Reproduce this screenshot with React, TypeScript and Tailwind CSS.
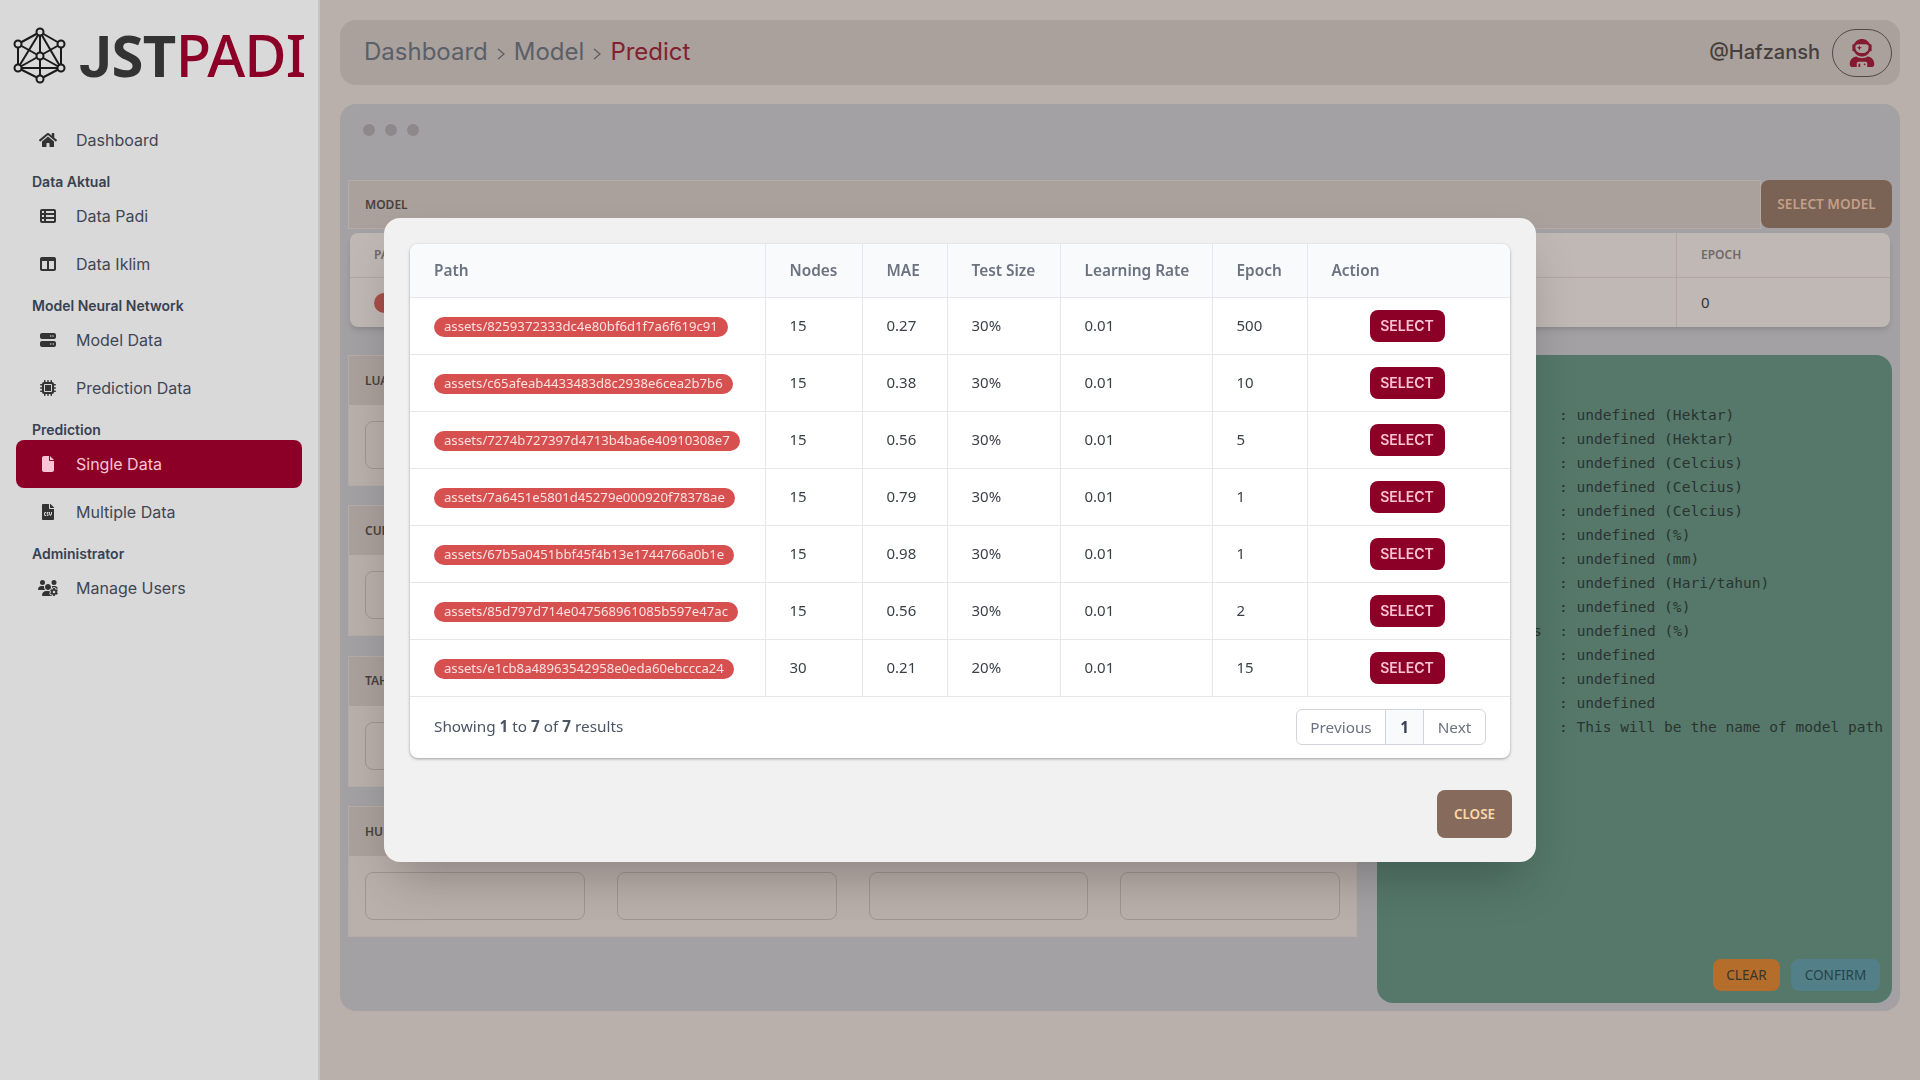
import { FaHome, FaUserAstronaut, FaFileCsv } from "react-icons/fa";
import { FaTableList, FaTableColumns, FaServer, FaMicrochip, FaFile, FaUsersGear } from "react-icons/fa6";
import type { ReactNode } from "react";

const inter = "font-['Inter',sans-serif]";
const noto = "font-['Noto_Sans',sans-serif]";

const rows = [
    { path: "assets/8259372333dc4e80bf6d1f7a6f619c91", nodes: 15, mae: "0.27", test: "30%", lr: "0.01", epoch: 500 },
    { path: "assets/c65afeab4433483d8c2938e6cea2b7b6", nodes: 15, mae: "0.38", test: "30%", lr: "0.01", epoch: 10 },
    { path: "assets/7274b727397d4713b4ba6e40910308e7", nodes: 15, mae: "0.56", test: "30%", lr: "0.01", epoch: 5 },
    { path: "assets/7a6451e5801d45279e000920f78378ae", nodes: 15, mae: "0.79", test: "30%", lr: "0.01", epoch: 1 },
    { path: "assets/67b5a0451bbf45f4b13e1744766a0b1e", nodes: 15, mae: "0.98", test: "30%", lr: "0.01", epoch: 1 },
    { path: "assets/85d797d714e047568961085b597e47ac", nodes: 15, mae: "0.56", test: "30%", lr: "0.01", epoch: 2 },
    { path: "assets/e1cb8a48963542958e0eda60ebccca24", nodes: 30, mae: "0.21", test: "20%", lr: "0.01", epoch: 15 },
];

const results = [
    "undefined (Hektar)", "undefined (Hektar)", "undefined (Celcius)", "undefined (Celcius)", "undefined (Celcius)",
    "undefined (%)", "undefined (mm)", "undefined (Hari/tahun)", "undefined (%)", "undefined (%)",
    "undefined", "undefined", "undefined", "This will be the name of model path",
];

function Logo() {
    const top = [39, 32], rt = [60, 44], rb = [60, 68], bot = [39, 79], lb = [17, 68], lt = [17, 44];
    const c = [39, 56];
    const edges = [
        [top, rt], [rt, rb], [rb, bot], [bot, lb], [lb, lt], [lt, top],
        [top, bot], [lb, rb], [top, lb], [top, rb], [lt, rb], [rt, lb],
    ];
    return (
        <svg width="56" height="60" viewBox="11 28 56 56" className="shrink-0" fill="none" stroke="#1a1a1a" strokeWidth="2">
            {edges.map(([a, b], i) => <line key={i} x1={a[0]} y1={a[1]} x2={b[0]} y2={b[1]} />)}
            {[top, rt, rb, bot, lb, lt, c].map((p, i) => <circle key={i} cx={p[0]} cy={p[1]} r="3.5" fill="#d9d9d9" />)}
        </svg>
    );
}

function Chevron() {
    return (
        <svg width="8" height="12" viewBox="0 0 8 12" className="mx-[9px] mt-[5px]" fill="none" stroke="#5a5f68" strokeWidth="1.4">
            <polyline points="1,1 7,6 1,11" />
        </svg>
    );
}

function NavItem({ icon, label, active }: { icon: ReactNode; label: string; active?: boolean }) {
    return (
        <div className={`flex items-center h-12 rounded-lg text-[16px] ${active ? "bg-[#8c0027] text-[#fbc4d4]" : "text-[#3f4654]"}`}>
            <span className={`w-[60px] pl-[7px] pr-[3px] flex justify-center text-[16px] ${active ? "text-[#fbc4d4]" : "text-[#333333]"}`}>{icon}</span>
            <span>{label}</span>
        </div>
    );
}

function NavTitle({ children }: { children: string }) {
    return <p className="mt-[8px] pl-[16px] text-[14px] font-semibold leading-[20px] text-[#374151]">{children}</p>;
}

function Sidebar() {
    return (
        <aside className={`w-[320px] shrink-0 min-h-screen bg-[#d9d9d9] border-r-2 border-[#c6c4c3] px-[16px] relative z-10 ${inter}`}>
            <div className="flex items-center h-[116px] -ml-[4px] pb-[4px]">
                <Logo />
                <span className={`text-[58px] leading-none ml-[11px] ${noto}`}>
                    <span className="font-bold text-[#333333]">
                        <span className="font-['Roboto',sans-serif]">J</span>
                        <span className="tracking-[-0.5px]">ST</span>
                    </span>
                    <span className="font-medium text-[#8c0027] tracking-[-1px]">PADI</span>
                </span>
            </div>
            <nav className="flex flex-col">
                <NavItem icon={<FaHome size={18} />} label="Dashboard" />
                <NavTitle>Data Aktual</NavTitle>
                <NavItem icon={<FaTableList />} label="Data Padi" />
                <NavItem icon={<FaTableColumns />} label="Data Iklim" />
                <NavTitle>Model Neural Network</NavTitle>
                <NavItem icon={<FaServer />} label="Model Data" />
                <NavItem icon={<FaMicrochip />} label="Prediction Data" />
                <NavTitle>Prediction</NavTitle>
                <NavItem icon={<FaFile />} label="Single Data" active />
                <NavItem icon={<FaFileCsv />} label="Multiple Data" />
                <NavTitle>Administrator</NavTitle>
                <NavItem icon={<FaUsersGear size={20} />} label="Manage Users" />
            </nav>
        </aside>
    );
}

function Section({ title }: { title: string }) {
    return (
        <div className="border border-[#b5aba7] bg-[#b9afab]">
            <div className={`h-[49px] bg-[#aaa09c] px-[16px] flex items-center text-[12px] font-semibold text-[#4a3f3b] ${noto}`}>{title}</div>
            <div className="grid grid-cols-4 gap-x-[32px] px-[16px] pt-[16px] pb-[16px]">
                {[0, 1, 2, 3].map((i) => <div key={i} className="h-[48px] rounded-lg border border-[#a1958f]" />)}
            </div>
        </div>
    );
}

function Background() {
    return (
        <main className="flex-1 min-w-0 px-[20px] pt-[20px] bg-[#b9afab]">
            <header className={`h-[65px] rounded-2xl bg-[#aaa09c] flex items-center justify-between pl-[24px] pr-[8px] ${inter}`}>
                <div className="flex items-center text-[24px] text-[#5a5f68] pb-[2px]">
                    <span>Dashboard</span>
                    <Chevron />
                    <span>Model</span>
                    <Chevron />
                    <span className="text-[#81202f]">Predict</span>
                </div>
                <div className="flex items-center gap-[12px]">
                    <span className="text-[20px] font-medium text-[#45403e] pb-[2px]">@Hafzansh</span>
                    <span className="w-[60px] h-[48px] rounded-full border border-[#54494a] flex items-center justify-center text-[28px] text-[#84192f]"><FaUserAstronaut /></span>
                </div>
            </header>
            <section className="mt-[19px] h-[907px] rounded-2xl bg-[#a3a1a3] px-[8px]">
                <div className="flex gap-[10px] h-[76px] pt-[20px] pl-[15px]">
                    {[0, 1, 2].map((i) => <span key={i} className="w-[12px] h-[12px] rounded-full bg-[#8d8889]" />)}
                </div>
                <div className="flex h-[49px]">
                    <div className={`flex-1 border border-[#b5aba7] bg-[#aaa09c] px-[16px] flex items-center text-[12px] font-semibold text-[#4a3f3b] ${noto}`}>MODEL</div>
                    <button className={`w-[131px] h-[48px] rounded-lg bg-[#7a6355] text-[13.6px] font-semibold text-[#c49f88] ${noto}`}>SELECT MODEL</button>
                </div>
                <div className={`mt-[4px] mx-[2px] h-[94px] rounded-lg bg-[#c0b8b5] shadow-md grid grid-cols-[1327px_1fr] ${noto}`}>
                    <div className="border-r border-[#b0a7a3]">
                        <div className="h-[45px] border-b border-[#b0a7a3] pl-[24px] flex items-center text-[12px] font-semibold text-[#6f6866]">PATH</div>
                        <div className="h-[49px] pl-[24px] flex items-center"><span className="w-[40px] h-[20px] rounded-full bg-[#a84f4b]" /></div>
                    </div>
                    <div>
                        <div className="h-[45px] border-b border-[#b0a7a3] pl-[24px] flex items-center text-[12px] font-semibold text-[#6f6866]">EPOCH</div>
                        <div className="h-[49px] pl-[24px] flex items-center text-[15px] text-[#33343a]">0</div>
                    </div>
                </div>
                <div className="mt-[28px] flex gap-[20px]">
                    <div className="w-[1009px] shrink-0 flex flex-col gap-[19.4px]">
                        <Section title="LUAS" />
                        <Section title="CURAH" />
                        <Section title="TAHUN" />
                        <Section title="HUMIDITY" />
                    </div>
                    <div className="flex-1 min-w-0 h-[648px] rounded-2xl bg-[#55786a] flex flex-col pl-[16px] pr-[12px] pb-[12px] pt-[48px]">
                        <div className="flex-1 font-['DejaVu_Sans_Mono',monospace] text-[14.55px] leading-[24px] text-[#2b332f] whitespace-pre pl-[166px]">
                            {results.map((r, i) => <div key={i} className={i === 9 ? "h-[24px] -ml-[26px]" : "h-[24px]"}>{i === 9 ? "s  " : ""}: {r}</div>)}
                        </div>
                        <div className={`flex justify-end gap-[11px] text-[13.6px] ${noto}`}>
                            <button className="w-[67px] h-[32px] rounded-lg bg-[#b56d2c] text-[#3c3426]">CLEAR</button>
                            <button className="w-[89px] h-[32px] rounded-lg bg-[#538088] text-[#26424a]">CONFIRM</button>
                        </div>
                    </div>
                </div>
            </section>
        </main>
    );
}

function ModelTable() {
    const th = "px-[24px] text-left font-semibold text-[15.4px] whitespace-nowrap text-[#6b7280] border-r border-[#e5e7eb] last:border-r-0";
    const td = "px-[24px] text-[15px] text-[#3b3f46] border-r border-[#e5e7eb] last:border-r-0";
    return (
        <div className={`rounded-lg bg-white shadow-[0_1px_3px_rgba(0,0,0,0.35)] overflow-hidden ${noto}`}>
            <table className="w-full table-fixed border-collapse">
                <colgroup>
                    <col className="w-[355px]" />
                    <col className="w-[97px]" />
                    <col className="w-[85px]" />
                    <col className="w-[113px]" />
                    <col className="w-[152px]" />
                    <col className="w-[95px]" />
                    <col />
                </colgroup>
                <thead>
                    <tr className="h-[53px] bg-[#f9fafb] border-b border-[#e5e7eb]">
                        {["Path", "Nodes", "MAE", "Test Size", "Learning Rate", "Epoch", "Action"].map((h) => <th key={h} className={th}>{h}</th>)}
                    </tr>
                </thead>
                <tbody>
                    {rows.map((r) => (
                        <tr key={r.path} className="h-[57px] border-b border-[#e5e7eb]">
                            <td className={td}>
                                <span className="inline-flex items-center h-[20px] px-[10px] rounded-full bg-[#d65050] text-[13.15px] text-[#fde0e0] whitespace-nowrap">{r.path}</span>
                            </td>
                            <td className={td}>{r.nodes}</td>
                            <td className={td}>{r.mae}</td>
                            <td className={td}>{r.test}</td>
                            <td className={td}>{r.lr}</td>
                            <td className={td}>{r.epoch}</td>
                            <td className="pl-[62px]">
                                <button className={`block w-[75px] h-[32px] rounded-lg bg-[#8c0027] text-[14px] font-semibold text-[#fbc4d4] ${inter}`}>SELECT</button>
                            </td>
                        </tr>
                    ))}
                </tbody>
            </table>
            <div className="h-[61px] flex items-center justify-between px-[24px] text-[15.3px] text-[#4b5563]">
                <p className="-mt-[2px]">Showing <b className="font-bold">1</b> to <b className="font-bold">7</b> of <b className="font-bold">7</b> results</p>
                <div className="flex h-[36px] rounded-md border border-[#d1d5db] text-[#6b7280]">
                    <span className="w-[89px] flex items-center justify-center border-r border-[#d1d5db]">Previous</span>
                    <span className="w-[38px] flex items-center justify-center border-r border-[#d1d5db] bg-[#f9fafb] font-bold text-[#374151]">1</span>
                    <span className="w-[61px] flex items-center justify-center">Next</span>
                </div>
            </div>
        </div>
    );
}

export default function App() {
    return (
        <div className="flex min-h-screen overflow-hidden">
            <Sidebar />
            <Background />
            <div className="fixed inset-0 z-20 flex items-center justify-center pointer-events-none">
                <div className="w-[1152px] h-[644px] rounded-2xl bg-[#f1f1f1] shadow-2xl px-[26px] pt-[26px] flex flex-col">
                    <ModelTable />
                    <div className="flex justify-end mt-[32px] -mr-[2px]">
                        <button className={`w-[75px] h-[48px] pt-[1px] rounded-lg bg-[#866b5d] text-[13.4px] font-semibold text-[#fed7aa] ${noto}`}>CLOSE</button>
                    </div>
                </div>
            </div>
        </div>
    );
}
